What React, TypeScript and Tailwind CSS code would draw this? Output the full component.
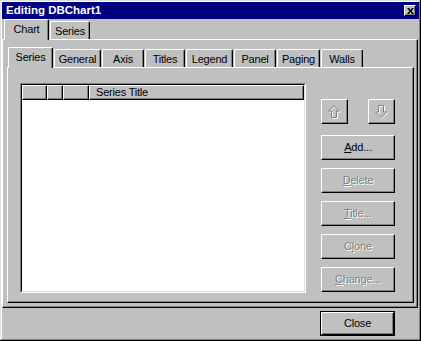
import React from "react";

const raised =
  "bg-[#c0c0c0] border border-white border-r-black border-b-black shadow-[inset_-1px_-1px_#808080]";

function Tab({
  label,
  w,
  selected,
  className = "",
}: {
  label: string;
  w: string;
  selected?: boolean;
  className?: string;
}) {
  if (selected) {
    return (
      <div
        className={`${w} h-[21px] -mb-[1px] relative z-10 bg-[#c0c0c0] border-t border-l border-r border-white border-r-black rounded-t-[2px] shadow-[inset_-1px_0_#808080] flex justify-center pt-[3px] leading-[13px] ${className}`}
      >
        {label}
      </div>
    );
  }
  return (
    <div
      className={`${w} h-[18px] bg-[#c0c0c0] border-t border-l border-r border-white border-r-black rounded-t-[2px] shadow-[inset_-1px_0_#808080] flex justify-center pt-[3px] leading-[13px] ${className}`}
    >
      {label}
    </div>
  );
}

function Btn({
  children,
  disabled,
  className = "",
}: {
  children: React.ReactNode;
  disabled?: boolean;
  className?: string;
}) {
  return (
    <div
      className={`${raised} w-[74px] h-[25px] flex items-center justify-center leading-none ${
        disabled ? "text-[#808080] [text-shadow:1px_1px_#ffffff]" : "text-black"
      } ${className}`}
    >
      {children}
    </div>
  );
}

function UpArrow() {
  return (
    <svg width="13" height="14" viewBox="0 0 13 14">
      <polygon
        points="6,0.5 0.5,6 3.5,6 3.5,12.5 8.5,12.5 8.5,6 11.5,6"
        fill="none"
        stroke="#ffffff"
        strokeWidth="1"
        transform="translate(1,1)"
      />
      <polygon
        points="6,0.5 0.5,6 3.5,6 3.5,12.5 8.5,12.5 8.5,6 11.5,6"
        fill="none"
        stroke="#808080"
        strokeWidth="1"
      />
    </svg>
  );
}

function DownArrow() {
  return (
    <svg width="13" height="14" viewBox="0 0 13 14">
      <polygon
        points="3.5,0.5 8.5,0.5 8.5,7 11.5,7 6,12.5 0.5,7 3.5,7"
        fill="none"
        stroke="#ffffff"
        strokeWidth="1"
        transform="translate(1,1)"
      />
      <polygon
        points="3.5,0.5 8.5,0.5 8.5,7 11.5,7 6,12.5 0.5,7 3.5,7"
        fill="none"
        stroke="#808080"
        strokeWidth="1"
      />
    </svg>
  );
}

export default function App() {
  return (
    <div className="w-[421px] h-[341px] bg-[#c0c0c0] p-[2px] flex flex-col shadow-[inset_-1px_-1px_#000000,inset_1px_1px_#dfdfdf,inset_-2px_-2px_#808080,inset_2px_2px_#ffffff] font-['Liberation_Sans',Arial,sans-serif] text-[11px] tracking-[-0.2px] text-black">
      {/* Title bar */}
      <div className="h-[17px] bg-[#000080] flex items-center justify-between pl-[4px] pr-[3px]">
        <span className="text-white font-bold text-[11.5px] tracking-[0px] leading-none">
          Editing DBChart1
        </span>
        <div className={`${raised} w-[12px] h-[11px] flex items-center justify-center`}>
          <svg width="7" height="6" viewBox="0 0 7 6">
            <path d="M0 0h2l1.5 2 1.5-2h2L4.5 3 7 6H5L3.5 4 2 6H0l2.5-3z" fill="#000" />
          </svg>
        </div>
      </div>

      {/* Outer tabs */}
      <div className="h-[20px] flex items-end pl-[2px]">
        <Tab label="Chart" w="w-[45px]" selected />
        <Tab label="Series" w="w-[40px]" className="ml-[1px]" />
      </div>

      {/* Outer panel */}
      <div className="mr-[1px] h-[269px] border border-white border-r-black border-b-black shadow-[inset_-1px_-1px_#808080] pt-[7px] pl-[4px] pr-[3px] pb-[4px] flex flex-col">
        {/* Inner tabs */}
        <div className="h-[20px] flex items-end pl-[1px]">
          <Tab label="Series" w="w-[45px]" selected />
          <Tab label="General" w="w-[47px]" className="ml-[1px]" />
          <Tab label="Axis" w="w-[42px]" className="ml-[1px]" />
          <Tab label="Titles" w="w-[40px]" className="ml-[1px]" />
          <Tab label="Legend" w="w-[47px]" className="ml-[1px]" />
          <Tab label="Panel" w="w-[42px]" className="ml-[1px]" />
          <Tab label="Paging" w="w-[43px]" className="ml-[1px]" />
          <Tab label="Walls" w="w-[42px]" className="ml-[1px]" />
        </div>

        {/* Inner panel */}
        <div className="w-[407px] h-[236px] border border-white border-r-black border-b-black shadow-[inset_-1px_-1px_#808080] flex items-start pl-[12px] pt-[15px]">
          {/* List view */}
          <div className="w-[286px] h-[210px] border border-[#808080] border-r-white border-b-white">
            <div className="w-full h-full border border-black border-r-[#dfdfdf] border-b-[#dfdfdf] bg-white flex flex-col">
              <div className="h-[15px] flex">
                <div className={`${raised} w-[25px] h-full`} />
                <div className={`${raised} w-[16px] h-full`} />
                <div className={`${raised} w-[26px] h-full`} />
                <div className={`${raised} flex-1 h-full pl-[6px] leading-[13px]`}>Series Title</div>
              </div>
            </div>
          </div>

          {/* Buttons column */}
          <div className="ml-[15px] w-[74px] pt-[16px] flex flex-col">
            <div className="flex justify-between">
              <div className={`${raised} w-[27px] h-[25px] flex items-center justify-center`}>
                <UpArrow />
              </div>
              <div className={`${raised} w-[27px] h-[25px] flex items-center justify-center`}>
                <DownArrow />
              </div>
            </div>
            <Btn className="mt-[11px]">
              <span>
                <u>A</u>dd...
              </span>
            </Btn>
            <Btn disabled className="mt-[8px]">
              <span>
                <u>D</u>elete
              </span>
            </Btn>
            <Btn disabled className="mt-[8px]">
              <span>
                <u>T</u>itle...
              </span>
            </Btn>
            <Btn disabled className="mt-[8px]">
              <span>
                C<u>l</u>one
              </span>
            </Btn>
            <Btn disabled className="mt-[8px]">
              <span>
                <u>C</u>hange...
              </span>
            </Btn>
          </div>
        </div>
      </div>

      {/* Bottom bar */}
      <div className="flex-1 flex justify-end items-start pt-[3px] pr-[24px]">
        <div className="w-[75px] h-[25px] border border-black flex">
          <div className={`${raised} flex-1 flex items-center justify-center leading-none`}>Close</div>
        </div>
      </div>
    </div>
  );
}
